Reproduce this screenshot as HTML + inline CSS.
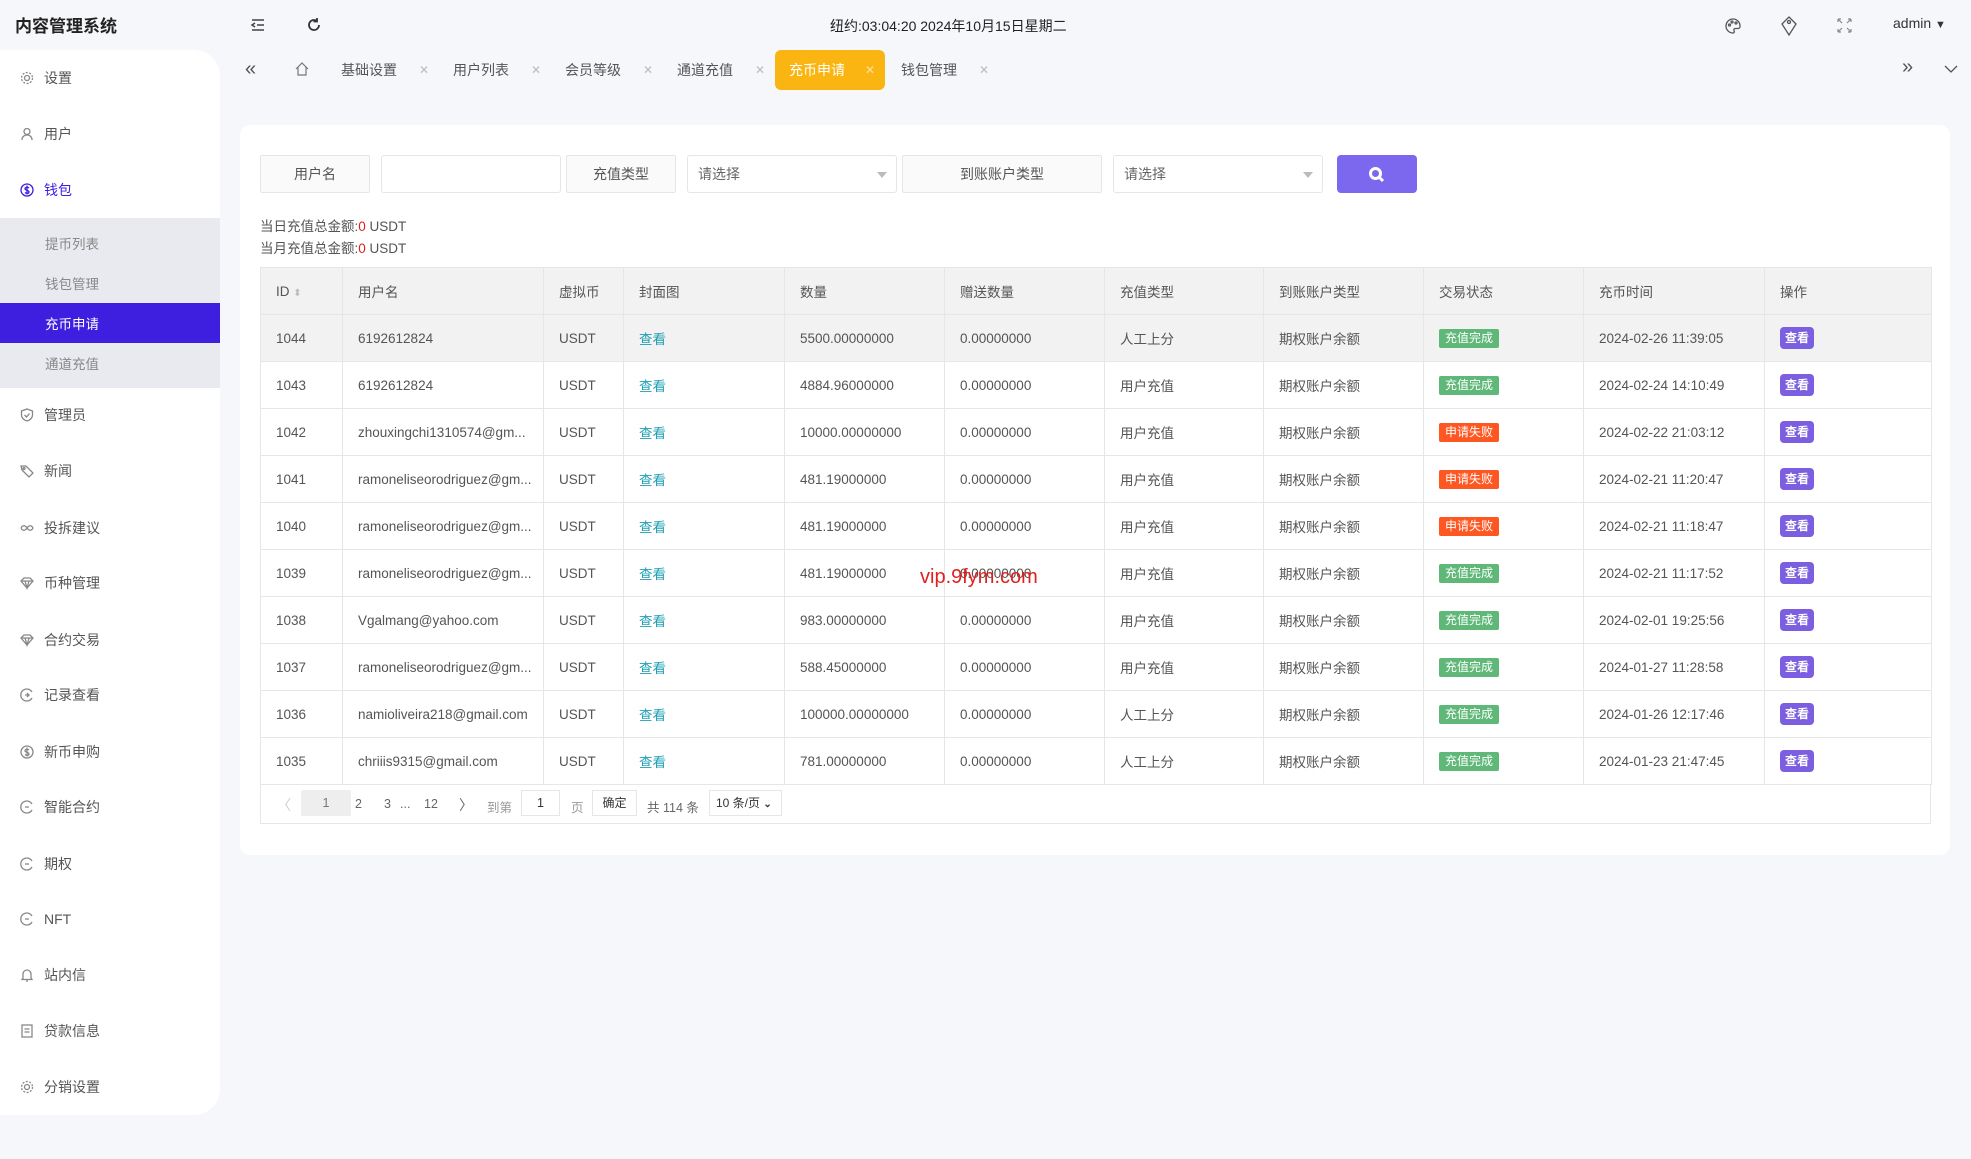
<!DOCTYPE html>
<html><head><meta charset="utf-8"><style>
*{margin:0;padding:0;box-sizing:border-box}
body{width:1971px;height:1159px;overflow:hidden;background:#f6f7fb;font-family:"Liberation Sans","Noto Sans CJK SC",sans-serif;color:#333;position:relative;font-size:14px}
.a{position:absolute}
.logo{left:15px;top:12px;font-size:17px;color:#222;font-weight:bold}
.side{left:0;top:50px;width:220px;height:1065px;background:#fff;border-top-right-radius:26px;border-bottom-right-radius:26px}
.mi{position:absolute;left:20px;font-size:14px;color:#555;display:flex;align-items:center;height:20px}
.mi svg{width:14px;height:14px;margin-right:10px;stroke:#888;fill:none;stroke-width:1.3}
.sub{left:0;top:218px;width:220px;height:170px;background:#e8eaef}
.si{position:absolute;left:45px;font-size:13.5px;color:#888}
.act{left:0;top:303px;width:220px;height:40px;background:#3e1fe0}
.tab{position:absolute;top:50px;height:40px;width:112px;font-size:14px;color:#555;display:flex;align-items:center;padding-left:14px}
.tab .x{position:absolute;right:10px;color:#bbb;font-size:12px}
.card{left:240px;top:125px;width:1710px;height:730px;background:#fff;border-radius:10px}
.lb{position:absolute;top:155px;height:38px;border:1px solid #e6e6e6;background:#fafafa;font-size:14px;color:#555;display:flex;align-items:center;justify-content:center;border-radius:2px}
.in{position:absolute;top:155px;height:38px;border:1px solid #e6e6e6;background:#fff;border-radius:3px;font-size:14px;color:#666;display:flex;align-items:center;padding-left:10px}
.tri{position:absolute;right:9px;top:16px;border-left:5px solid transparent;border-right:5px solid transparent;border-top:6px solid #bbb}
table{position:absolute;left:260px;top:267px;border-collapse:collapse;width:1671px;table-layout:fixed}
td,th{border:1px solid #e6e6e6;height:47px;padding-left:15px;font-size:13.5px;color:#555;text-align:left;font-weight:normal;white-space:nowrap;overflow:hidden}
th{background:#f2f2f2}
tr.h td{background:#f2f2f2}
.lk{color:#1e9fb4}
.bg{display:inline-block;width:60px;height:19px;line-height:19px;text-align:center;color:#fff;font-size:12px;border-radius:2px}
.g{background:#5fb878}.o{background:#ff5722}
.btn{display:inline-block;width:34px;height:22px;line-height:22px;text-align:center;color:#fff;background:#7b5fe0;border-radius:4px;font-size:12px;font-weight:bold}
.pg{position:absolute;top:784px;left:260px;width:1671px;height:40px;border:1px solid #e6e6e6;border-top:none}
.p{position:absolute;top:13px;font-size:12.5px;color:#666}
</style></head><body>
<div class="a logo">内容管理系统</div>
<svg class="a" style="left:250px;top:17px" width="16" height="16" viewBox="0 0 16 16" fill="none" stroke="#444" stroke-width="1.5"><path d="M2 3h12M7 8h7M2 13h12M5 6l-3 2 3 2"/></svg>
<svg class="a" style="left:306px;top:17px" width="16" height="16" viewBox="0 0 16 16" fill="none" stroke="#333" stroke-width="1.8"><path d="M13 8a5 5 0 1 1-2-4"/><path d="M11 1v3.5h-3.5"/></svg>
<div class="a" style="left:830px;top:16px;font-size:14px;color:#222">纽约:03:04:20 2024年10月15日星期二</div>
<svg class="a" style="left:1724px;top:17px" width="18" height="18" viewBox="0 0 18 18" fill="none" stroke="#555" stroke-width="1.3"><path d="M9 2a7 7 0 1 0 0 14c1.5 0 1.5-1.5 1-2.5s0-2 1.5-2H14a2 2 0 0 0 2-2A7 7 0 0 0 9 2z"/><circle cx="5.5" cy="8" r="1"/><circle cx="8" cy="5" r="1"/><circle cx="12" cy="6" r="1"/></svg>
<svg class="a" style="left:1780px;top:16px" width="18" height="20" viewBox="0 0 18 20" fill="none" stroke="#555" stroke-width="1.3"><path d="M9 1l7 7-7 11-7-11z"/><circle cx="9" cy="6" r="1.5"/></svg>
<svg class="a" style="left:1837px;top:18px" width="15" height="15" viewBox="0 0 15 15" fill="none" stroke="#888" stroke-width="1.2"><path d="M1 1l4 4M1 1v3M1 1h3M14 1l-4 4M14 1v3M14 1h-3M1 14l4-4M1 14v-3M1 14h3M14 14l-4-4M14 14v-3M14 14h-3"/></svg>
<div class="a" style="left:1893px;top:15px;font-size:14px;color:#333">admin <span style="font-size:11px">▼</span></div>

<div class="a side"></div>
<div class="a sub"></div>
<div class="a act"></div>
<div class="mi" style="top:68px"><svg viewBox="0 0 14 14"><circle cx="7" cy="7" r="2.5"/><circle cx="7" cy="7" r="5.5" stroke-dasharray="2 1.5"/></svg>设置</div>
<div class="mi" style="top:124px"><svg viewBox="0 0 14 14"><circle cx="7" cy="4.5" r="3"/><path d="M2 13c0-3 2-5 5-5s5 2 5 5"/></svg>用户</div>
<div class="mi" style="top:180px;color:#3e1fe0"><svg viewBox="0 0 14 14" style="stroke:#3e1fe0"><circle cx="7" cy="7" r="6"/><path d="M9 5c-1-1-4-1-4 .8S9 7 9 9s-3 1.5-4 .5M7 2.5v9"/></svg>钱包</div>
<div class="si" style="top:233px">提币列表</div>
<div class="si" style="top:273px">钱包管理</div>
<div class="si" style="top:313px;color:#fff">充币申请</div>
<div class="si" style="top:353px">通道充值</div>
<div class="mi" style="top:405px"><svg viewBox="0 0 14 14"><path d="M7 1l5.5 2v4c0 3-2.5 5-5.5 6-3-1-5.5-3-5.5-6V3z"/><path d="M4.5 7l2 2 3-3.5"/></svg>管理员</div>
<div class="mi" style="top:461px"><svg viewBox="0 0 14 14"><path d="M1 2h5l7 7-4 4-7-7z"/><circle cx="4" cy="4.5" r="1"/></svg>新闻</div>
<div class="mi" style="top:518px"><svg viewBox="0 0 14 14"><path d="M1 7c1.5-3 4-3 6 0s4.5 3 6 0c-1.5-3-4-3-6 0s-4.5 3-6 0"/></svg>投拆建议</div>
<div class="mi" style="top:573px"><svg viewBox="0 0 14 14"><path d="M1 5l3-3h6l3 3-6 7z"/><path d="M1 5h12M5 5l2 7 2-7"/></svg>币种管理</div>
<div class="mi" style="top:630px"><svg viewBox="0 0 14 14"><path d="M1 5l3-3h6l3 3-6 7z"/><path d="M1 5h12M5 5l2 7 2-7"/></svg>合约交易</div>
<div class="mi" style="top:685px"><svg viewBox="0 0 14 14"><path d="M12 4a6 6 0 1 0 0 6"/><path d="M5 7h4M7 5l2 2-2 2"/></svg>记录查看</div>
<div class="mi" style="top:742px"><svg viewBox="0 0 14 14"><circle cx="7" cy="7" r="6"/><path d="M9 5c-1-1-4-1-4 .8S9 7 9 9s-3 1.5-4 .5M7 2.5v9"/></svg>新币申购</div>
<div class="mi" style="top:797px"><svg viewBox="0 0 14 14"><path d="M12 4a6 6 0 1 0 0 6"/><path d="M5 7h4"/></svg>智能合约</div>
<div class="mi" style="top:854px"><svg viewBox="0 0 14 14"><path d="M12 4a6 6 0 1 0 0 6"/><path d="M5 7h4"/></svg>期权</div>
<div class="mi" style="top:909px"><svg viewBox="0 0 14 14"><path d="M12 4a6 6 0 1 0 0 6"/><path d="M5 7h4"/></svg>NFT</div>
<div class="mi" style="top:965px"><svg viewBox="0 0 14 14"><path d="M3 10V6a4 4 0 0 1 8 0v4l1 1.5H2zM6 13h2"/></svg>站内信</div>
<div class="mi" style="top:1021px"><svg viewBox="0 0 14 14"><rect x="2" y="1" width="10" height="12"/><path d="M4.5 5h5M4.5 8h5"/></svg>贷款信息</div>
<div class="mi" style="top:1077px"><svg viewBox="0 0 14 14"><circle cx="7" cy="7" r="2.5"/><circle cx="7" cy="7" r="5.5" stroke-dasharray="2 1.5"/></svg>分销设置</div>

<div class="a" style="left:245px;top:58px;font-size:20px;color:#555">«</div>
<svg class="a" style="left:294px;top:61px" width="16" height="16" viewBox="0 0 16 16" fill="none" stroke="#777" stroke-width="1.2"><path d="M2 8l6-6 6 6M4 6v8h8V6"/></svg>
<div class="tab" style="left:327px">基础设置<span class="x">✕</span></div>
<div class="tab" style="left:439px">用户列表<span class="x">✕</span></div>
<div class="tab" style="left:551px">会员等级<span class="x">✕</span></div>
<div class="tab" style="left:663px">通道充值<span class="x">✕</span></div>
<div class="tab" style="left:775px;width:110px;background:#fbb512;color:#fff;border-radius:6px">充币申请<span class="x" style="color:#fde0a0">✕</span></div>
<div class="tab" style="left:887px">钱包管理<span class="x">✕</span></div>
<div class="a" style="left:1902px;top:56px;font-size:20px;color:#555">»</div>
<svg class="a" style="left:1944px;top:64px" width="14" height="10" viewBox="0 0 14 10" fill="none" stroke="#555" stroke-width="1.3"><path d="M1 2l6 6 6-6"/></svg>

<div class="a card"></div>
<div class="lb" style="left:260px;width:110px">用户名</div>
<div class="in" style="left:381px;width:180px"></div>
<div class="lb" style="left:566px;width:110px">充值类型</div>
<div class="in" style="left:687px;width:210px">请选择<span class="tri"></span></div>
<div class="lb" style="left:902px;width:200px">到账账户类型</div>
<div class="in" style="left:1113px;width:210px">请选择<span class="tri"></span></div>
<div class="a" style="left:1337px;top:155px;width:80px;height:38px;background:#7b68ee;border-radius:4px"><svg style="position:absolute;left:31px;top:11px" width="18" height="18" viewBox="0 0 18 18" fill="none" stroke="#fff" stroke-width="3"><circle cx="7.5" cy="7.5" r="5"/><path d="M11 11l4 4"/></svg></div>
<div class="a" style="left:260px;top:215px;font-size:13.5px;color:#555">当日充值总金额:<span style="color:#e02020">0</span> USDT</div>
<div class="a" style="left:260px;top:237px;font-size:13.5px;color:#555">当月充值总金额:<span style="color:#e02020">0</span> USDT</div>

<table>
<colgroup><col style="width:82px"><col style="width:201px"><col style="width:80px"><col style="width:161px"><col style="width:160px"><col style="width:160px"><col style="width:159px"><col style="width:160px"><col style="width:160px"><col style="width:181px"><col style="width:167px"></colgroup>
<tr><th>ID <span style="color:#bbb;font-size:10px">⬍</span></th><th>用户名</th><th>虚拟币</th><th>封面图</th><th>数量</th><th>赠送数量</th><th>充值类型</th><th>到账账户类型</th><th>交易状态</th><th>充币时间</th><th>操作</th></tr>
<tr class="h"><td>1044</td><td>6192612824</td><td>USDT</td><td class="lk">查看</td><td>5500.00000000</td><td>0.00000000</td><td>人工上分</td><td>期权账户余额</td><td><span class="bg g">充值完成</span></td><td>2024-02-26 11:39:05</td><td><span class="btn">查看</span></td></tr>
<tr><td>1043</td><td>6192612824</td><td>USDT</td><td class="lk">查看</td><td>4884.96000000</td><td>0.00000000</td><td>用户充值</td><td>期权账户余额</td><td><span class="bg g">充值完成</span></td><td>2024-02-24 14:10:49</td><td><span class="btn">查看</span></td></tr>
<tr><td>1042</td><td>zhouxingchi1310574@gm...</td><td>USDT</td><td class="lk">查看</td><td>10000.00000000</td><td>0.00000000</td><td>用户充值</td><td>期权账户余额</td><td><span class="bg o">申请失败</span></td><td>2024-02-22 21:03:12</td><td><span class="btn">查看</span></td></tr>
<tr><td>1041</td><td>ramoneliseorodriguez@gm...</td><td>USDT</td><td class="lk">查看</td><td>481.19000000</td><td>0.00000000</td><td>用户充值</td><td>期权账户余额</td><td><span class="bg o">申请失败</span></td><td>2024-02-21 11:20:47</td><td><span class="btn">查看</span></td></tr>
<tr><td>1040</td><td>ramoneliseorodriguez@gm...</td><td>USDT</td><td class="lk">查看</td><td>481.19000000</td><td>0.00000000</td><td>用户充值</td><td>期权账户余额</td><td><span class="bg o">申请失败</span></td><td>2024-02-21 11:18:47</td><td><span class="btn">查看</span></td></tr>
<tr><td>1039</td><td>ramoneliseorodriguez@gm...</td><td>USDT</td><td class="lk">查看</td><td>481.19000000</td><td>0.00000000</td><td>用户充值</td><td>期权账户余额</td><td><span class="bg g">充值完成</span></td><td>2024-02-21 11:17:52</td><td><span class="btn">查看</span></td></tr>
<tr><td>1038</td><td>Vgalmang@yahoo.com</td><td>USDT</td><td class="lk">查看</td><td>983.00000000</td><td>0.00000000</td><td>用户充值</td><td>期权账户余额</td><td><span class="bg g">充值完成</span></td><td>2024-02-01 19:25:56</td><td><span class="btn">查看</span></td></tr>
<tr><td>1037</td><td>ramoneliseorodriguez@gm...</td><td>USDT</td><td class="lk">查看</td><td>588.45000000</td><td>0.00000000</td><td>用户充值</td><td>期权账户余额</td><td><span class="bg g">充值完成</span></td><td>2024-01-27 11:28:58</td><td><span class="btn">查看</span></td></tr>
<tr><td>1036</td><td>namioliveira218@gmail.com</td><td>USDT</td><td class="lk">查看</td><td>100000.00000000</td><td>0.00000000</td><td>人工上分</td><td>期权账户余额</td><td><span class="bg g">充值完成</span></td><td>2024-01-26 12:17:46</td><td><span class="btn">查看</span></td></tr>
<tr><td>1035</td><td>chriiis9315@gmail.com</td><td>USDT</td><td class="lk">查看</td><td>781.00000000</td><td>0.00000000</td><td>人工上分</td><td>期权账户余额</td><td><span class="bg g">充值完成</span></td><td>2024-01-23 21:47:45</td><td><span class="btn">查看</span></td></tr>
</table>
<div class="a" style="left:920px;top:566px;font-size:20px;color:#e02020">vip.9fym.com</div>

<div class="pg">
<span class="p" style="left:16px;color:#ccc;font-size:14px;top:11px">〈</span>
<span class="a" style="left:40px;top:6px;width:50px;height:26px;background:#eee;border-radius:2px;text-align:center;line-height:26px;font-size:12.5px;color:#777">1</span>
<span class="p lk" style="left:94px">2</span>
<span class="p lk" style="left:123px">3</span>
<span class="p" style="left:139px">...</span>
<span class="p lk" style="left:163px">12</span>
<span class="p lk" style="left:198px;font-size:14px;top:11px">〉</span>
<span class="p" style="left:226px;color:#999">到第</span>
<span class="a" style="left:260px;top:6px;width:39px;height:26px;border:1px solid #e6e6e6;text-align:center;line-height:24px;font-size:12.5px">1</span>
<span class="p" style="left:310px;color:#999">页</span>
<span class="a" style="left:331px;top:6px;width:45px;height:26px;border:1px solid #e6e6e6;text-align:center;line-height:24px;font-size:12px;color:#333">确定</span>
<span class="p" style="left:386px">共 114 条</span>
<span class="a" style="left:448px;top:6px;width:73px;height:26px;border:1px solid #e6e6e6;line-height:24px;font-size:12px;padding-left:6px;color:#333">10 条/页 <b style="font-size:10px">⌄</b></span>
</div>
</body></html>
